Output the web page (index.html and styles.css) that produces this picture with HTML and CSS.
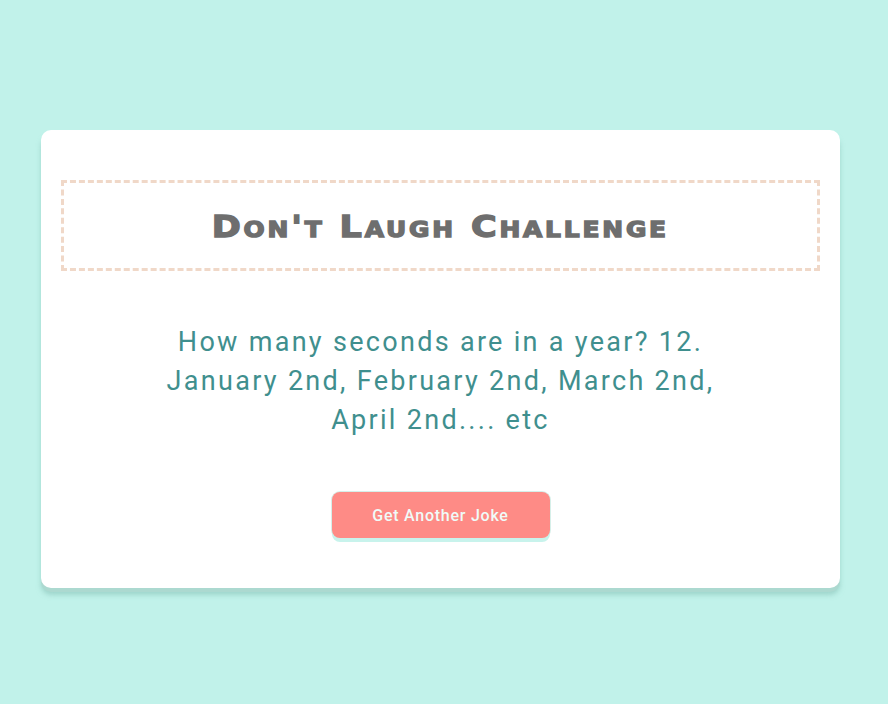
FILE: index.html
```html
<!DOCTYPE html>
<html>
<head>
<meta charset="utf-8">
<link rel="stylesheet" href="styles.css">
</head>
<body>
<main class="page">
  <section class="card">
    <div class="title-box">
      <h1 class="title">Don't Laugh Challenge</h1>
    </div>
    <p class="joke">How many seconds are in a year? 12.<br>January 2nd, February 2nd, March 2nd,<br>April 2nd.... etc</p>
    <button class="btn">Get Another Joke</button>
  </section>
</main>
</body>
</html>
```

FILE: styles.css
```css
html, body {
  margin: 0;
  padding: 0;
}
body {
  background: #c1f2ea;
  width: 888px;
  height: 704px;
  overflow: hidden;
}
.page {
  display: flex;
  justify-content: center;
  padding-top: 130px;
  padding-right: 7px;
}
.card {
  width: 799px;
  box-sizing: border-box;
  background: #ffffff;
  border-radius: 10px;
  box-shadow: 0 4px 0 #acd9d0, 0 7px 5px rgba(130, 190, 178, 0.55);
  padding: 50px 20px 50px;
  display: flex;
  flex-direction: column;
  align-items: center;
}
.title-box {
  width: 100%;
  box-sizing: border-box;
  height: 91px;
  border: 3px dashed #f0d8c8;
  display: flex;
  align-items: center;
  justify-content: center;
}
.title {
  margin: 0;
  font-family: "DejaVu Sans", sans-serif;
  font-weight: 700;
  font-variant: small-caps;
  font-size: 31px;
  letter-spacing: 2.5px;
  color: #6e6e6e;
  -webkit-text-stroke: 1.4px #6e6e6e;
  transform: scaleX(1.13);
}
.joke {
  margin: 52px 0 0;
  font-family: Roboto, sans-serif;
  font-size: 27px;
  letter-spacing: 2.3px;
  line-height: 39px;
  color: #3f8f8e;
  text-align: center;
}
.btn {
  margin-top: 52px;
  width: 218px;
  height: 46px;
  border: none;
  border-radius: 8px;
  background: #fe8b86;
  color: #f0fbf8;
  font-family: Roboto, sans-serif;
  font-size: 16px;
  font-weight: 500;
  letter-spacing: 0.75px;
  box-shadow: 0 4px 0 #c8f3ec, 0 0 0 1px #d6efe9;
}
```
